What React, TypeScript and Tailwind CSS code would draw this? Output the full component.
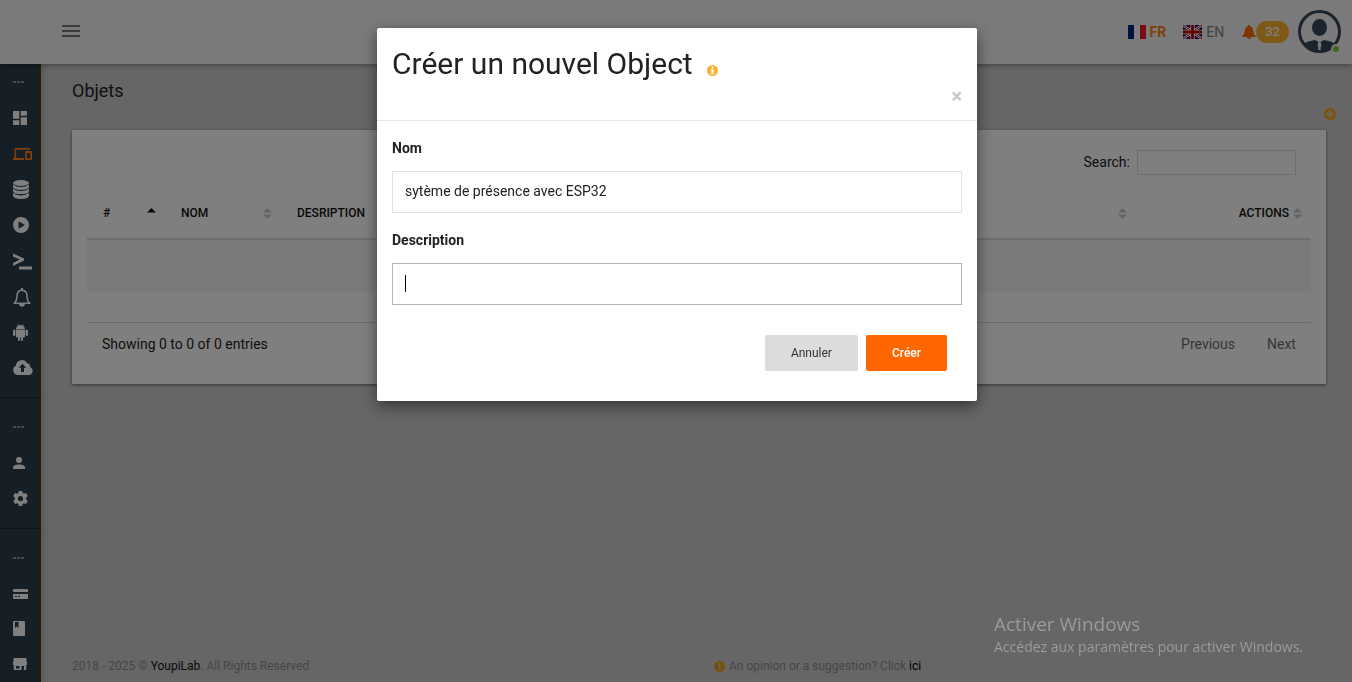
import type { ReactNode } from "react";

const icon = (width: number, height: number, body: ReactNode) => (
  <svg width={width} height={height} viewBox={`0 0 ${width} ${height}`} fill="currentColor" aria-hidden="true">
    {body}
  </svg>
);

const DashboardIcon = icon(14, 14, <path d="M0 0h6.300v7.800H0zM7.700 0H14v4.700H7.700zM0 9.300h6.300V14H0zM7.700 6.200H14V14H7.700z" />);

const DevicesIcon = icon(
  19,
  12,
  <path d="M3.200 1.700H17V0H3Q1.500 0 1.500 1.500V10H0v2h11v-2H3.200zM18.200 3H13q-.800 0-.800.800v7.400q0 .8.8.8h5.200q.8 0 .8-.8V3.800q0-.8-.8-.8zm-.9 7.200h-3.400V4.900h3.400z" />,
);

const DatabaseIcon = icon(
  16,
  19,
  <>
    <ellipse cx="8" cy="3" rx="8" ry="3" />
    <path d="M0 4.500Q3 7 8 7t8-2.500v2.700Q15 9.800 8 9.800T0 7.200z" />
    <path d="M0 8.800q3 2.300 8 2.300t8-2.300v2.600q-1 2.600-8 2.600T0 11.400z" />
    <path d="M0 13q3 2.400 8 2.400T16 13v3q-1 3-8 3t-8-3z" />
  </>,
);

const PlayIcon = icon(
  16,
  16,
  <path fillRule="evenodd" d="M8 0a8 8 0 1 1 0 16A8 8 0 0 1 8 0zM5.600 4.200v7.600L12 8z" />,
);

const TerminalIcon = icon(
  19,
  17,
  <>
    <path d="M0 .500 11 5.600v2L0 13V10l6.800-3.400L0 3.500z" />
    <path d="M6 13.500h13V16.500H6z" />
  </>,
);

const BellIcon = icon(
  18,
  19,
  <>
    <path
      d="M1.200 15.200Q4 13 4 7.500 4 3 9 2q5 1 5 5.500 0 5.500 2.800 7.700z"
      fill="none"
      stroke="currentColor"
      strokeWidth="1.500"
      strokeLinejoin="round"
    />
    <path d="M8 0h2v2.500H8zM6 16h6q-.5 2.800-3 2.800T6 16z" />
  </>,
);

const AndroidIcon = icon(
  15,
  17,
  <>
    <path d="M3 5Q3.200 2.500 5 1.500L4.200.200 4.600 0l.9 1.300q2-.7 4 0L10.400 0l.4.200L10 1.500Q11.800 2.500 12 5z" />
    <path d="M3 5.600h9v7.200q0 .8-.8.8H10v2.400a1 1 0 0 1-2 0v-2.400H7v2.400a1 1 0 0 1-2 0v-2.400H3.800q-.8 0-.8-.8z" />
    <rect x="0" y="5.500" width="2.400" height="6.500" rx="1.200" />
    <rect x="12.600" y="5.500" width="2.400" height="6.500" rx="1.200" />
  </>,
);

const CloudIcon = icon(
  20,
  15,
  <path
    fillRule="evenodd"
    d="M5 15a5 5 0 0 1-2-9.500A5.800 5.800 0 0 1 14 3.300 3.300 3.300 0 0 1 17.200 7 4.200 4.200 0 0 1 15.800 15zM9.500 3.800 5.800 7.800H8V12h3V7.800h2.200z"
  />,
);

const PersonIcon = icon(
  12,
  12,
  <>
    <circle cx="6" cy="3" r="3" />
    <path d="M0 12v-1.500Q0 7.600 6 7.600t6 2.900V12z" />
  </>,
);

const GearIcon = icon(
  15,
  15,
  <path
    fillRule="evenodd"
    d="M5.800 0h3.400l.5 2.100 1.300.7 2-.8 1.800 3-1.600 1.500v2L14.800 10 13 13l-2-.8-1.300.7-.5 2.100H5.800l-.5-2.100-1.300-.7-2 .8L.200 10l1.600-1.500v-2L.200 5 2 2l2 .8 1.300-.7zM7.500 4.900a2.600 2.600 0 1 0 0 5.200 2.600 2.600 0 0 0 0-5.200z"
  />,
);

const CardIcon = icon(
  15,
  10,
  <path
    fillRule="evenodd"
    d="M1 0h13q1 0 1 1v2H0V1q0-1 1-1zM0 5h15v4q0 1-1 1H1q-1 0-1-1zM2 7v1h2V7zM5 7v1h2V7z"
  />,
);

const BookIcon = icon(
  12,
  15,
  <path fillRule="evenodd" d="M1 0h10q1 0 1 1v13q0 1-1 1H1q-1 0-1-1V1q0-1 1-1zM2 1v6l1.700-1.400L5.500 7V1z" />,
);

const StoreIcon = icon(
  14,
  12,
  <path fillRule="evenodd" d="M.500 0h13v3l.5 2v2h-.800v5H11V8H8.500v4H.800V7H0V5l.5-2zM3 8v2.600h3.500V8z" />,
);

type Item = { label: string; icon: ReactNode; row: string; tone: string };

const light = "text-white";
const groups: Item[][] = [
  [
    { label: "Tableau de bord", icon: DashboardIcon, row: "h-9", tone: light },
    { label: "Objets", icon: DevicesIcon, row: "h-9", tone: "text-[#ff7f1a]" },
    { label: "Données", icon: DatabaseIcon, row: "h-[35px]", tone: light },
    { label: "Scénarios", icon: PlayIcon, row: "h-9", tone: light },
    { label: "Console", icon: TerminalIcon, row: "h-9", tone: light },
    { label: "Alertes", icon: BellIcon, row: "h-9", tone: light },
    { label: "Android", icon: AndroidIcon, row: "h-[35px]", tone: light },
    { label: "Envoi", icon: CloudIcon, row: "h-[35px]", tone: light },
  ],
  [
    { label: "Profil", icon: PersonIcon, row: "h-[35px]", tone: light },
    { label: "Paramètres", icon: GearIcon, row: "h-9", tone: light },
  ],
  [
    { label: "Abonnement", icon: CardIcon, row: "h-[35px]", tone: light },
    { label: "Documentation", icon: BookIcon, row: "h-[35px]", tone: light },
    { label: "Boutique", icon: StoreIcon, row: "h-[35px]", tone: light },
  ],
];

function Sidebar() {
  return (
    <nav className="w-[42px] shrink-0 border-r border-[#ffb22b] bg-[#2a3e4b] shadow-[1px_0_6px_rgba(0,0,0,0.2)]">
      {groups.map((items, g) => (
        <ul key={g} className="border-[#172a36] not-first:border-t not-first:pt-[11px] not-last:pb-3">
          <li className="flex h-9 items-center gap-px pl-[13px]" aria-hidden="true">
            <i className="h-0.5 w-[3px] bg-[#8a9299]" />
            <i className="h-0.5 w-[3px] bg-[#8a9299]" />
            <i className="h-0.5 w-[3px] bg-[#8a9299]" />
          </li>
          {items.map((item) => (
            <li key={item.label} className={item.row}>
              <a href="#" aria-label={item.label} className={`flex h-full items-center pl-[13px] ${item.tone}`}>
                {item.icon}
              </a>
            </li>
          ))}
        </ul>
      ))}
    </nav>
  );
}

function Sort({ ascending = false }: { ascending?: boolean }) {
  return (
    <svg width="9" height="11" viewBox="0 0 9 11" className="shrink-0" aria-hidden="true">
      <path d="M0 4.500 4.500 0 9 4.500z" fill={ascending ? "#111" : "#c8c8c8"} />
      {!ascending && <path d="M0 6.500 4.500 11 9 6.500z" fill="#c8c8c8" />}
    </svg>
  );
}

function FlagFR() {
  return (
    <svg width="18" height="14" viewBox="0 0 18 14" aria-hidden="true">
      <path d="M0 0h6v14H0z" fill="#00267f" />
      <path d="M6 0h6v14H6z" fill="#fff" />
      <path d="M12 0h6v14h-6z" fill="#f31830" />
    </svg>
  );
}

function FlagGB() {
  return (
    <svg width="19" height="14" viewBox="0 0 19 14" aria-hidden="true">
      <path d="M0 0h19v14H0z" fill="#000066" />
      <path d="m0 0 19 14M19 0 0 14" stroke="#fff" strokeWidth="2.800" />
      <path d="m0 0 19 14M19 0 0 14" stroke="#c00" strokeWidth="1" />
      <path d="M9.500 0v14M0 7h19" stroke="#fff" strokeWidth="4.600" />
      <path d="M9.500 0v14M0 7h19" stroke="#c00" strokeWidth="2.800" />
    </svg>
  );
}

function Avatar() {
  return (
    <svg width="43" height="43" viewBox="0 0 43 43" aria-hidden="true">
      <clipPath id="avatar-clip">
        <circle cx="21.500" cy="21.500" r="21" />
      </clipPath>
      <circle cx="21.500" cy="21.500" r="20" fill="none" stroke="#37475a" strokeWidth="3" />
      <ellipse cx="21.500" cy="17.500" rx="7.500" ry="8.500" fill="#37475a" />
      <g clipPath="url(#avatar-clip)" fill="#37475a">
        <path d="M5 34q5-3 12-4l3.500 2-1 3 1 3-1.500 5H10z" />
        <path d="M38 34q-5-3-12-4l-3.500 2 1 3-1 3 1.500 5h9z" />
      </g>
      <path d="M5 34q1-1 2-1.400L10 37z" fill="#37475a" />
    </svg>
  );
}

function Header() {
  return (
    <header className="relative z-10 flex h-16 items-center justify-between bg-[#f4f4f4] pr-[11px] pl-[62px] shadow-[0_1px_5px_rgba(0,0,0,0.4)]">
      <button aria-label="Menu" className="-mt-0.5 flex flex-col gap-[3px]">
        <i className="h-0.5 w-[18px] bg-[#787878]" />
        <i className="h-0.5 w-[18px] bg-[#787878]" />
        <i className="h-0.5 w-[18px] bg-[#787878]" />
      </button>
      <div className="-mt-px flex items-center text-sm leading-[18px]">
        <a href="#fr" className="mr-[17px] flex items-center gap-1 font-bold text-[#ff7f1a]">
          <FlagFR />
          FR
        </a>
        <a href="#en" className="mr-[18px] flex items-center gap-1 text-[#848484]">
          <FlagGB />
          EN
        </a>
        <button aria-label="Notifications" className="mr-[9px] flex items-center">
          <svg width="14" height="14" viewBox="0 0 14 14" fill="#ff6a00" aria-hidden="true">
            <path d="M6 0h2v1.200q3 1 3.200 4.300.2 4 2.300 5.300.5.500 0 1.200H.500q-.5-.7 0-1.200Q2.600 9.500 2.800 5.500 3 2.200 6 1.200zM4.800 12.300h4.400Q9 14 7 14t-2.200-1.700z" />
          </svg>
          <span className="rounded-full bg-[#ffb32e] px-[9px] text-[13px] leading-[22px] font-medium text-white">32</span>
        </button>
        <a href="#profile" aria-label="Profil" className="relative block">
          <Avatar />
          <i className="absolute right-0.5 bottom-px size-1.5 rounded-full bg-[#86cc48] ring-2 ring-[#f4f4f4]" />
        </a>
      </div>
    </header>
  );
}

function ObjectsCard() {
  return (
    <section className="bg-white px-[15px] pt-5 pb-7 shadow-[0_1px_3px_rgba(0,0,0,0.5)]">
      <div className="flex items-start justify-end gap-[7px] pr-[15px]">
        <label htmlFor="search" className="leading-6">
          Search:
        </label>
        <input
          id="search"
          type="search"
          className="h-[25px] w-[159px] border border-[#dedede] bg-white px-2 outline-none"
        />
      </div>
      <table className="mt-[13px] w-full table-fixed border-collapse text-left text-xs text-[#111]">
        <colgroup>
          <col className="w-[78px]" />
          <col className="w-[116px]" />
          <col />
          <col className="w-[175px]" />
        </colgroup>
        <thead>
          <tr className="h-[51px] border-b-2 border-[#dcdcdc]">
            <th className="pr-[9px] pl-4 font-medium">
              <span className="flex items-center justify-between">
                # <Sort ascending />
              </span>
            </th>
            <th className="pr-[9px] pl-4 font-medium">
              <span className="flex items-center justify-between">
                NOM <Sort />
              </span>
            </th>
            <th className="pr-[9px] pl-4 font-medium">
              <span className="flex items-center justify-between">
                DESRIPTION <Sort />
              </span>
            </th>
            <th className="pr-[9px] font-medium">
              <span className="flex items-center justify-end gap-1">
                ACTIONS <Sort />
              </span>
            </th>
          </tr>
        </thead>
        <tbody>
          <tr className="h-[53px] bg-[#f4f4f4]">
            <td colSpan={4} />
          </tr>
        </tbody>
      </table>
      <div className="mt-[30px] flex items-center justify-between border-t border-[#d8d8d8] px-[15px] pt-[9px] leading-6">
        <p>Showing 0 to 0 of 0 entries</p>
        <div className="flex gap-8 text-[#6c6c6c]">
          <button>Previous</button>
          <button>Next</button>
        </div>
      </div>
    </section>
  );
}

function Footer() {
  return (
    <footer className="mt-auto flex pb-[7px] text-xs leading-[18px] text-[#8c8c8c]">
      <p className="w-1/2">
        2018 - 2025 ©{" "}
        <a href="#youpilab" className="text-[#111]">
          YoupiLab
        </a>
        . All Rights Reserved
      </p>
      <p className="flex items-center gap-1 pl-[15px]">
        <svg width="11" height="11" viewBox="0 0 11 11" aria-hidden="true">
          <circle cx="5.500" cy="5.500" r="5.500" fill="#f0a01c" />
          <path d="M4.500 2h2L6.200 6.500H4.800zM4.700 7.300h1.600v1.500H4.700z" fill="#ccc" />
        </svg>
        <span>
          An opinion or a suggestion? Click{" "}
          <a href="#feedback" className="text-black">
            ici
          </a>
        </span>
      </p>
    </footer>
  );
}

function CreateDialog() {
  return (
    <div className="fixed inset-0 z-20 overflow-auto bg-black/50 px-4 pt-7">
      <div
        role="dialog"
        aria-modal="true"
        aria-labelledby="dialog-title"
        className="relative left-px mx-auto max-w-[600px] rounded-xs bg-white pb-[30px] text-[#222] shadow-[0_5px_15px_rgba(0,0,0,0.5)]"
      >
        <header className="border-b border-[#e5e5e5] px-[15px] pt-4 pb-3">
          <h2 id="dialog-title" className="flex items-center gap-3.5 text-[30px] leading-10">
            Créer un nouvel Object
            <svg width="11" height="11" viewBox="0 0 11 11" className="mt-3" aria-hidden="true">
              <circle cx="5.500" cy="5.500" r="5.500" fill="#fbb034" />
              <path d="M4.600 1.600h1.900v1.700H4.600zM3.900 4.200h2.600v3.700h.7v1H3.900v-1h.7V5.200h-.7z" fill="#fff" />
            </svg>
          </h2>
          <button aria-label="Fermer" className="ml-auto block h-6 text-xl leading-[22px] font-bold text-[#c4c4c4]">
            ×
          </button>
        </header>
        <form className="px-[15px] pt-4" onSubmit={(e) => e.preventDefault()}>
          <label htmlFor="name" className="block leading-[22px] font-bold">
            Nom
          </label>
          <input
            id="name"
            defaultValue="sytème de présence avec ESP32"
            className="mt-3 block h-[42px] w-full border border-[#e1e1e1] px-3 pb-0.5 outline-none"
          />
          <label htmlFor="description" className="mt-4 block leading-[22px] font-bold">
            Description
          </label>
          <div className="relative mt-3">
            <input
              id="description"
              className="block h-[42px] w-full border border-[#b5b5b5] px-3 pb-0.5 caret-transparent outline-none"
            />
            <i className="absolute top-3 left-[13px] h-[17px] w-px bg-black" />
          </div>
          <div className="mt-[30px] flex justify-end gap-2 pr-[15px] text-xs">
            <button type="button" className="h-9 rounded-xs bg-[#dcdcdc] px-[26px] text-[#333]">
              Annuler
            </button>
            <button type="submit" className="h-9 rounded-xs bg-[#ff6600] px-[26px] font-medium text-white">
              Créer
            </button>
          </div>
        </form>
      </div>
    </div>
  );
}

export default function App() {
  return (
    <div className="flex min-h-screen flex-col bg-[#cccccc] font-['Roboto',sans-serif] text-sm text-[#222]">
      <Header />
      <div className="flex grow">
        <Sidebar />
        <main className="flex min-w-0 grow flex-col pt-[15px] pr-[26px] pl-[30px]">
          <h1 className="text-lg leading-6">Objets</h1>
          <button aria-label="Ajouter" className="mt-[5px] -mr-2.5 mb-2.5 self-end">
            <svg width="12" height="12" viewBox="0 0 12 12" className="block" aria-hidden="true">
              <circle cx="6" cy="6" r="6" fill="#f9a91f" />
              <path d="M5 2.500h2V5h2.500v2H7v2.500H5V7H2.500V5H5z" fill="#ccc" />
            </svg>
          </button>
          <ObjectsCard />
          <Footer />
        </main>
      </div>
      <CreateDialog />
      <aside className="pointer-events-none fixed right-[45px] bottom-6 z-30 w-[313px] font-['Open_Sans',sans-serif] text-[#9b9b9b]">
        <p className="text-[19px] leading-6">Activer Windows</p>
        <p className="text-sm leading-[22px]">Accédez aux paramètres pour activer Windows.</p>
      </aside>
    </div>
  );
}
